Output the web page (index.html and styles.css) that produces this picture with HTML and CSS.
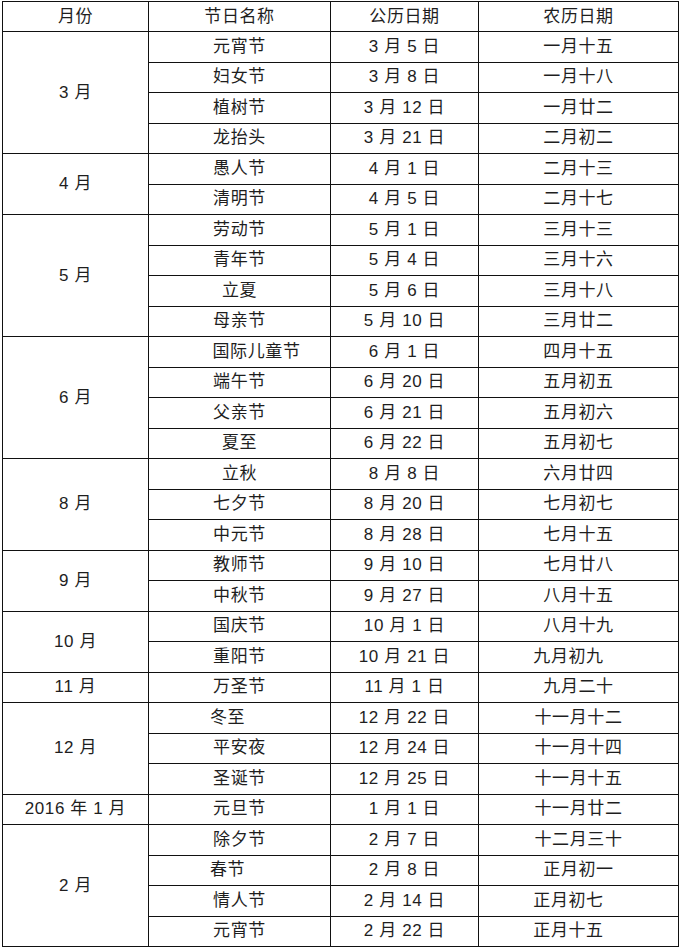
FILE: index.html
```html
<!DOCTYPE html>
<html lang="zh-CN">
<head>
<meta charset="utf-8">
<title>节日表</title>
<link rel="stylesheet" href="styles.css">
</head>
<body>
<table class="holidays">
  <colgroup>
    <col class="c-month"><col class="c-name"><col class="c-solar"><col class="c-lunar">
  </colgroup>
  <thead>
    <tr class="head"><th>月份</th><th>节日名称</th><th>公历日期</th><th>农历日期</th></tr>
  </thead>
  <tbody>
    <tr><td rowspan="4">3 月</td><td>元宵节</td><td>3 月 5 日</td><td>一月十五</td></tr>
    <tr><td>妇女节</td><td>3 月 8 日</td><td>一月十八</td></tr>
    <tr><td>植树节</td><td>3 月 12 日</td><td>一月廿二</td></tr>
    <tr><td>龙抬头</td><td>3 月 21 日</td><td>二月初二</td></tr>

    <tr><td rowspan="2">4 月</td><td>愚人节</td><td>4 月 1 日</td><td>二月十三</td></tr>
    <tr><td>清明节</td><td>4 月 5 日</td><td>二月十七</td></tr>

    <tr><td rowspan="4">5 月</td><td>劳动节</td><td>5 月 1 日</td><td>三月十三</td></tr>
    <tr><td>青年节</td><td>5 月 4 日</td><td>三月十六</td></tr>
    <tr><td>立夏</td><td>5 月 6 日</td><td>三月十八</td></tr>
    <tr><td>母亲节</td><td>5 月 10 日</td><td>三月廿二</td></tr>

    <tr><td rowspan="4">6 月</td><td class="push-r">国际儿童节</td><td>6 月 1 日</td><td>四月十五</td></tr>
    <tr><td>端午节</td><td>6 月 20 日</td><td>五月初五</td></tr>
    <tr><td>父亲节</td><td>6 月 21 日</td><td>五月初六</td></tr>
    <tr><td>夏至</td><td>6 月 22 日</td><td>五月初七</td></tr>

    <tr><td rowspan="3">8 月</td><td>立秋</td><td>8 月 8 日</td><td>六月廿四</td></tr>
    <tr><td>七夕节</td><td>8 月 20 日</td><td>七月初七</td></tr>
    <tr><td>中元节</td><td>8 月 28 日</td><td>七月十五</td></tr>

    <tr><td rowspan="2">9 月</td><td>教师节</td><td>9 月 10 日</td><td>七月廿八</td></tr>
    <tr><td>中秋节</td><td>9 月 27 日</td><td>八月十五</td></tr>

    <tr><td rowspan="2">10 月</td><td>国庆节</td><td>10 月 1 日</td><td>八月十九</td></tr>
    <tr><td>重阳节</td><td>10 月 21 日</td><td class="push-l">九月初九</td></tr>

    <tr><td>11 月</td><td>万圣节</td><td>11 月 1 日</td><td>九月二十</td></tr>

    <tr><td rowspan="3">12 月</td><td class="pull-l">冬至</td><td>12 月 22 日</td><td>十一月十二</td></tr>
    <tr><td>平安夜</td><td>12 月 24 日</td><td>十一月十四</td></tr>
    <tr><td>圣诞节</td><td>12 月 25 日</td><td>十一月十五</td></tr>

    <tr><td>2016 年 1 月</td><td>元旦节</td><td>1 月 1 日</td><td>十一月廿二</td></tr>

    <tr><td rowspan="4">2 月</td><td>除夕节</td><td>2 月 7 日</td><td>十二月三十</td></tr>
    <tr><td class="pull-l">春节</td><td>2 月 8 日</td><td>正月初一</td></tr>
    <tr><td>情人节</td><td>2 月 14 日</td><td class="push-l">正月初七</td></tr>
    <tr><td>元宵节</td><td>2 月 22 日</td><td class="push-l">正月十五</td></tr>
  </tbody>
</table>
</body>
</html>
```

FILE: styles.css
```css
html, body {
  margin: 0;
  padding: 0;
  background: #ffffff;
}

body {
  padding: 1px 0 0 2px;
}

.holidays {
  border-collapse: collapse;
  table-layout: fixed;
  width: 676px;
  font-family: "Liberation Sans", "Noto Sans CJK SC", sans-serif;
  font-size: 17px;
  letter-spacing: 0.6px;
  color: #1e1e1e;
}

.c-month { width: 146px; }
.c-name { width: 182px; }
.c-solar { width: 148px; }
.c-lunar { width: 200px; }

.holidays th,
.holidays td {
  border: 1px solid #111;
  padding: 0;
  text-align: center;
  vertical-align: middle;
  font-weight: normal;
  line-height: 20px;
  white-space: nowrap;
}

.holidays .head th {
  height: 29px;
}

.holidays tbody tr {
  height: 30.5px;
}

.holidays td.push-r { padding-left: 34px; }
.holidays td.pull-l { padding-right: 24px; }
.holidays td.push-l { padding-right: 20px; }
```
